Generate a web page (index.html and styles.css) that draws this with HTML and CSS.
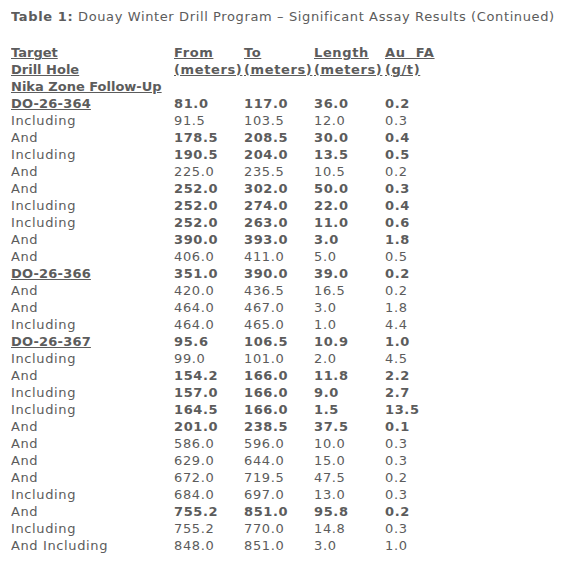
FILE: index.html
```html
<!DOCTYPE html>
<html>
<head>
<meta charset="utf-8">
<link rel="stylesheet" href="styles.css">
</head>
<body>
<p class="title"><b>Table 1:</b> Douay Winter Drill Program – Significant Assay Results (Continued)</p>
<table class="assay">
  <colgroup>
    <col class="c-hole"><col class="c-num"><col class="c-num"><col class="c-len"><col class="c-au">
  </colgroup>
  <thead>
    <tr>
      <th class="target"><u>Target<br>Drill Hole<br>Nika Zone Follow-Up</u></th>
      <th><u>From<br>(meters)</u></th>
      <th><u>To<br>(meters)</u></th>
      <th><u>Length<br>(meters)</u></th>
      <th><u>Au&nbsp; FA<br>(g/t)</u></th>
    </tr>
  </thead>
  <tbody>
    <tr class="b"><td class="hole"><u>DO-26-364</u></td><td>81.0</td><td>117.0</td><td>36.0</td><td>0.2</td></tr>
    <tr><td>Including</td><td>91.5</td><td>103.5</td><td>12.0</td><td>0.3</td></tr>
    <tr class="b"><td>And</td><td>178.5</td><td>208.5</td><td>30.0</td><td>0.4</td></tr>
    <tr class="b"><td>Including</td><td>190.5</td><td>204.0</td><td>13.5</td><td>0.5</td></tr>
    <tr><td>And</td><td>225.0</td><td>235.5</td><td>10.5</td><td>0.2</td></tr>
    <tr class="b"><td>And</td><td>252.0</td><td>302.0</td><td>50.0</td><td>0.3</td></tr>
    <tr class="b"><td>Including</td><td>252.0</td><td>274.0</td><td>22.0</td><td>0.4</td></tr>
    <tr class="b"><td>Including</td><td>252.0</td><td>263.0</td><td>11.0</td><td>0.6</td></tr>
    <tr class="b"><td>And</td><td>390.0</td><td>393.0</td><td>3.0</td><td>1.8</td></tr>
    <tr><td>And</td><td>406.0</td><td>411.0</td><td>5.0</td><td>0.5</td></tr>
    <tr class="b"><td class="hole"><u>DO-26-366</u></td><td>351.0</td><td>390.0</td><td>39.0</td><td>0.2</td></tr>
    <tr><td>And</td><td>420.0</td><td>436.5</td><td>16.5</td><td>0.2</td></tr>
    <tr><td>And</td><td>464.0</td><td>467.0</td><td>3.0</td><td>1.8</td></tr>
    <tr><td>Including</td><td>464.0</td><td>465.0</td><td>1.0</td><td>4.4</td></tr>
    <tr class="b"><td class="hole"><u>DO-26-367</u></td><td>95.6</td><td>106.5</td><td>10.9</td><td>1.0</td></tr>
    <tr><td>Including</td><td>99.0</td><td>101.0</td><td>2.0</td><td>4.5</td></tr>
    <tr class="b"><td>And</td><td>154.2</td><td>166.0</td><td>11.8</td><td>2.2</td></tr>
    <tr class="b"><td>Including</td><td>157.0</td><td>166.0</td><td>9.0</td><td>2.7</td></tr>
    <tr class="b"><td>Including</td><td>164.5</td><td>166.0</td><td>1.5</td><td>13.5</td></tr>
    <tr class="b"><td>And</td><td>201.0</td><td>238.5</td><td>37.5</td><td>0.1</td></tr>
    <tr><td>And</td><td>586.0</td><td>596.0</td><td>10.0</td><td>0.3</td></tr>
    <tr><td>And</td><td>629.0</td><td>644.0</td><td>15.0</td><td>0.3</td></tr>
    <tr><td>And</td><td>672.0</td><td>719.5</td><td>47.5</td><td>0.2</td></tr>
    <tr><td>Including</td><td>684.0</td><td>697.0</td><td>13.0</td><td>0.3</td></tr>
    <tr class="b"><td>And</td><td>755.2</td><td>851.0</td><td>95.8</td><td>0.2</td></tr>
    <tr><td>Including</td><td>755.2</td><td>770.0</td><td>14.8</td><td>0.3</td></tr>
    <tr><td>And Including</td><td>848.0</td><td>851.0</td><td>3.0</td><td>1.0</td></tr>
  </tbody>
</table>
</body>
</html>
```

FILE: styles.css
```css
html, body {
  background: #ffffff;
}
body {
  margin: 8px 8px 8px 11px;
  font-family: "DejaVu Sans", Verdana, sans-serif;
  font-size: 13px;
  line-height: 17px;
  letter-spacing: 0.62px;
  color: #5c5c5c;
}
.title {
  margin: 0 0 19px 0;
}
.assay {
  border-collapse: collapse;
  table-layout: fixed;
  width: 425px;
}
.c-hole { width: 163px; }
.c-num { width: 70px; }
.c-len { width: 71px; }
.c-au { width: 51px; }
.assay th, .assay td {
  padding: 0;
  text-align: left;
  vertical-align: top;
  white-space: nowrap;
}
.assay th {
  font-weight: bold;
}
.assay th.target {
  letter-spacing: 0;
}
.assay tr.b td {
  font-weight: bold;
}
.assay tr.b td:first-child {
  font-weight: normal;
}
.assay tr.b td.hole {
  font-weight: bold;
  letter-spacing: 0.2px;
}
```
